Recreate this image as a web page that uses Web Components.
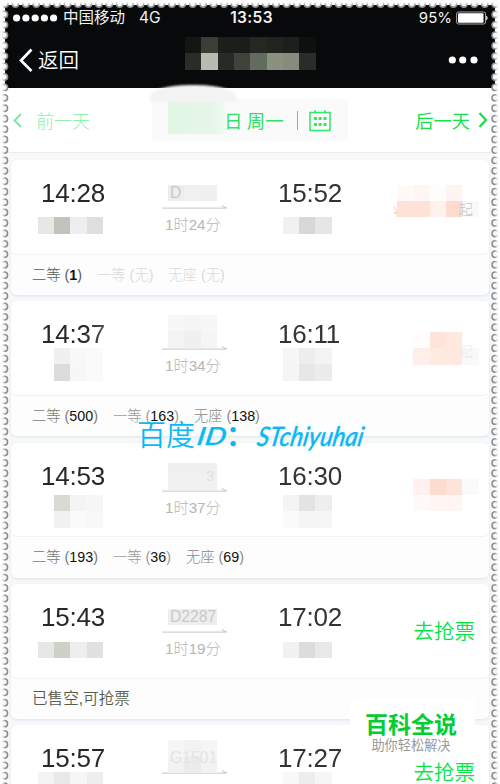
<!DOCTYPE html>
<html lang="zh-CN"><head><meta charset="utf-8"><title>车次列表</title>
<style>
html,body{margin:0;width:500px;height:784px;overflow:hidden;background:#fff}
body{font-family:"Liberation Sans","Noto Sans CJK SC",sans-serif}
</style></head><body>
<phone-screen>
<status-bar></status-bar>
<nav-bar></nav-bar>
<date-bar></date-bar>
<train-list></train-list>
</phone-screen>
<water-mark></water-mark>
<brand-badge></brand-badge>
<stamp-edge></stamp-edge>
<script>
function define(name, html, ready){
  const t=document.createElement('template'); t.innerHTML=html;
  customElements.define(name, class extends HTMLElement{
    connectedCallback(){
      if(this.shadowRoot) return;
      this.attachShadow({mode:'open'}).append(t.content.cloneNode(true));
      if(ready) ready(this,this.shadowRoot);
    }
  });
}
// Grid of blurred-out cells: rows split by "/", colours by space, "-" is clear.
define('mosaic-block',`<style>:host{display:grid;grid-auto-rows:var(--ch,16.4px);width:max-content}</style>`,(el,r)=>{
  const rows=el.getAttribute('cells').split('/').map(s=>s.trim().split(/\s+/));
  el.style.gridTemplateColumns=`repeat(${rows[0].length},16.35px)`;
  for(const c of rows.flat()){const i=document.createElement('i');i.style.background=c==='-'?'transparent':'#'+c;r.append(i);}
});
define('phone-screen',`<style>:host{display:flex;flex-direction:column;box-sizing:border-box;margin:5px 5px 0;height:779px;overflow:hidden;background:#f7f8fa}</style><slot></slot>`);
define('status-bar',`<style>
:host{display:grid;grid-template-columns:1fr auto 1fr;align-items:center;height:26px;flex:none;background:#08090b;color:#f2f2f2;padding:0 7px 0 8px;font:15.5px/26px Inter,"Noto Sans CJK SC",sans-serif}
div{display:flex;align-items:center}.r{justify-content:flex-end;gap:4px;font-size:15px}
.c{font-weight:600;font-size:15.5px;letter-spacing:.35px;margin-left:2px}
.n{margin-left:5px}.g{margin-left:14px;font-size:15.5px}svg{display:block}
</style><div><svg width="45" height="10"><g fill="#fff"><circle cx="3.6" cy="5" r="3.6"/><circle cx="12.9" cy="5" r="3.6"/><circle cx="22.2" cy="5" r="3.6"/><circle cx="31.4" cy="5" r="3.6"/><circle cx="40.6" cy="5" r="3.6"/></g></svg><span class="n">中国移动</span><span class="g">4G</span></div><span class="c">13:53</span><div class="r"><span>95%</span><svg width="32" height="14"><rect x=".6" y="1" width="29" height="12" rx="2" fill="none" stroke="#aaa"/><rect x="2" y="2.2" width="25.5" height="9.6" rx="1" fill="#fff"/><path d="M30.5 5q1.5 2 0 4z" fill="#fff" stroke="#ccc"/></svg></div>`);
define('nav-bar',`<style>
:host{display:flex;position:relative;align-items:center;justify-content:space-between;height:57px;flex:none;background:#08090b;color:#fff;padding:0 17px 0 13px;font:350 20.5px/57px "Noto Sans CJK SC",sans-serif;box-sizing:border-box}
.b{display:flex;align-items:center;gap:5px}
mosaic-block{position:absolute;left:180px;top:6px}
</style><div class="b"><svg width="15" height="24"><path d="M13.5 1.5 3 12.5 13.5 23" fill="none" stroke="#fff" stroke-width="2.7"/></svg><span>返回</span></div>
<mosaic-block cells="131613 393e37 1b1f1b 1a1d19 242722 20231e 1c1f1b 0e100f/282d28 b7bbb2 262b26 3e433c 636a5f 89917f 858c7d 282d2a"></mosaic-block>
<svg width="30" height="10"><g fill="#fff"><circle cx="4.3" cy="5" r="3.6"/><circle cx="14.7" cy="5" r="3.6"/><circle cx="26" cy="5" r="3.6"/></g></svg>`);
define('date-bar',`<style>
:host{position:relative;display:grid;grid-template-columns:147px 196px 1fr;align-items:center;height:65px;flex:none;box-sizing:border-box;background:#fff;border-bottom:1px solid #e9eaeb;font:300 18px/30px "Noto Sans CJK SC",sans-serif;color:#14e14b}
.p,.n{display:flex;align-items:center}.p{padding-left:8px;gap:14px;color:#8cf3ae}.n{justify-content:flex-end;padding-right:7px;gap:8px;font-size:18.3px;font-weight:400}
.d{display:flex;align-items:center;height:42px;background:#fafafa;border-radius:4px;color:#30e168}
.m{width:57px;height:33px;margin:-6px 0 0 16px;background:linear-gradient(90deg,#e0f7e5,#e6f6e9 80%,#effaf1)}
.t{font-size:18.5px;font-weight:400;white-space:pre;margin-left:-1px}
.bar{width:1.5px;height:19px;background:#38e56d;margin:0 11px 0 13px}
.s{position:absolute;left:145px;top:-3px;width:86px;height:17px;background:#f3f3f3;border-radius:45% 45% 0 0/70% 70% 0 0;filter:blur(1.2px)}
</style><i class="s"></i><div class="p"><svg width="9" height="15"><path d="M8 1 1.5 7.5 8 14" fill="none" stroke="#6fed9a" stroke-width="1.8"/></svg><span>前一天</span></div>
<div class="d"><i class="m"></i><span class="t">日 周一</span><i class="bar"></i><svg width="22" height="23"><g fill="none" stroke="#32e76a" stroke-width="1.5"><path d="M1 3.5H21V21.5H1zM6 1V4M16 1V4"/></g><g fill="#32e76a"><path d="M5 8h3v3H5zM9.7 8h3v3h-3zM14.5 8h3v3h-3zM5 14h3v3H5zM9.7 14h3v3h-3zM14.5 14h3v3h-3z"/></g></svg></div>
<div class="n"><span>后一天</span><svg width="10" height="16"><path d="M1.5 1 8 8 1.5 15" fill="none" stroke="#10df48" stroke-width="2.2"/></svg></div>`);
define('seat-count',`<style>:host{display:inline-flex;white-space:pre;font-weight:300}b{font-weight:400}i{font-style:normal}</style><span></span><b></b><i>)</i>`,(el,r)=>{
  r.querySelector('span').textContent=el.getAttribute('kind')+' (';
  const b=r.querySelector('b');b.textContent=el.getAttribute('n');b.style.color=el.getAttribute('n')==='无'?'inherit':'#111';b.style.fontWeight=el.getAttribute('n')==='无'?300:(el.hasAttribute('strong')?700:400);
});
define('train-card',`<style>
:host{position:relative;display:flex;flex-direction:column;height:135px;flex:none;background:#fdfdfd;border-radius:6px;box-shadow:0 1px 3px #dde3e8}
.top{height:94.5px;flex:none;background:#fff;border-radius:6px;border-bottom:1px solid #f1f2f3;display:grid;grid-template-columns:121px 120px 1fr auto;box-sizing:border-box;padding:17px 14px 0 30px}
.t{font:26px/32px "Liberation Sans",sans-serif;color:#252823;letter-spacing:-.2px}
.dep{-webkit-mask:var(--dm)}.arr{margin-left:-4px;color:#333;-webkit-mask:linear-gradient(#000 45%,#0007 80%)}
.mid{display:flex;flex-direction:column;height:66px;width:72px}
.no{height:21px;padding:6px 0 0 8px;font:15.7px/20px "Liberation Sans",sans-serif;color:var(--nc,#c9c9c9);white-space:pre;position:relative;z-index:2}
.arrow{display:block;flex:none;margin:1px 0 0 0}
.dur{font:15.2px/22px "Liberation Sans","Noto Sans CJK SC",sans-serif;font-weight:300;color:#b6b6b6;padding:0 0 0 3px;margin-top:4px;white-space:nowrap}
.act{font:350 20.5px/30px "Noto Sans CJK SC",sans-serif;color:#05e546;margin-top:14px}
.foot{display:flex;align-items:center;gap:15px;height:40px;padding-left:21px;font:14.3px/20px "Liberation Sans","Noto Sans CJK SC",sans-serif;font-weight:300;color:#565d51}
::slotted(mosaic-block),::slotted(.over){position:absolute}
</style><div class="top"><span class="t dep"></span><div class="mid"><span class="no"></span><svg class="arrow" width="66" height="5"><path d="M0 3.2H65L60 .6" fill="none" stroke="#d2d2d2" stroke-width="1.2"/></svg><span class="dur"></span></div><span class="t arr"></span><span class="act"></span></div><div class="foot"><slot name="seats"></slot></div><slot></slot>`,(el,r)=>{
  for(const c of ['dep','arr','no','dur','act']){const v=el.getAttribute(c),n=r.querySelector('.'+c);n.textContent=v||'';}
});
define('train-list',`<style>
:host{display:flex;flex-direction:column;gap:6.35px;padding:7px 6px 0;flex:1;min-height:0;background:#f6f8fa}
.over{font:300 15px/18px "Noto Sans CJK SC",sans-serif}
seat-count{display:inline-flex}
</style>
<train-card dep="14:28" arr="15:52" no="D" dur="1时24分" style="--dm:linear-gradient(#000 50%,#0008 85%)">
<seat-count slot="seats" kind="二等" n="1" strong></seat-count><seat-count slot="seats" kind="一等" n="无" style="color:#dadada"></seat-count><seat-count slot="seats" kind="无座" n="无" style="color:#dadada"></seat-count>
<mosaic-block style="left:26.5px;top:57.4px" cells="e7e8e5 c1c4bc eeeeee dedfde"></mosaic-block>
<mosaic-block style="left:271.5px;top:57.4px" cells="f1f1f1 d8d8d8 e6e6e6"></mosaic-block>
<mosaic-block style="left:157px;top:24.5px" cells="ededed f1f1f0 f0f0f0"></mosaic-block>
<span class="over" style="left:382px;top:42px;color:#fbd0bc">¥</span>
<mosaic-block style="left:386px;top:24.5px" cells="fffaf8 fff5f2 fffdfc fff4f1 ffffff/fee2d7 fee2d7 fff2ed fddccf f9f9f9"></mosaic-block>
<span class="over" style="left:447px;top:40px;color:#c8c8c8">起</span>
</train-card>
<train-card dep="14:37" arr="16:11" dur="1时34分" style="--dm:linear-gradient(100deg,#000 35%,#0007 70%)">
<seat-count slot="seats" kind="二等" n="500" style="color:#777c72"></seat-count><seat-count slot="seats" kind="一等" n="163" style="color:#999"></seat-count><seat-count slot="seats" kind="无座" n="138" style="color:#888"></seat-count>
<mosaic-block style="left:42.7px;top:46.5px" cells="f0f0ef f8f8f8 fafafa/dcdcda f7f7f7 fafafa"></mosaic-block>
<mosaic-block style="left:271.5px;top:46.5px" cells="f6f6f6 ededed f4f4f4/f5f5f5 e7e7e7 ececec"></mosaic-block>
<mosaic-block style="left:157px;top:13.5px" cells="f7f7f7 f5f5f5 f7f7f7/f3f3f3 f0f0f0 f5f5f5"></mosaic-block>
<mosaic-block style="left:402.3px;top:30.5px" cells="fffdfc fee4da fee8df ffffff/ffefeb ffeae2 ffe8df f9f9f9"></mosaic-block>
<span class="over" style="left:447px;top:41px;color:#ededed">起</span>
</train-card>
<train-card dep="14:53" arr="16:30" dur="1时37分" style="--dm:linear-gradient(#000 50%,#0006 85%)">
<seat-count slot="seats" kind="二等" n="193" style="color:#747a6f"></seat-count><seat-count slot="seats" kind="一等" n="36" style="color:#999"></seat-count><seat-count slot="seats" kind="无座" n="69" style="color:#888"></seat-count>
<mosaic-block style="left:42.7px;top:52.3px" cells="d8dad6 f4f4f4 f6f6f6/f1f1f0 fafafa f8f8f8"></mosaic-block>
<mosaic-block style="left:271.5px;top:52.3px" cells="f4f4f4 e3e3e3 eeeeee/fafafa f5f5f5 f6f6f6"></mosaic-block>
<mosaic-block style="left:157px;top:20px;--ch:13.5px" cells="f0f0f0 f0f0f0 efefef/f1f1f1 f1f1f1 f1f1f1"></mosaic-block>
<mosaic-block style="left:402.3px;top:36px" cells="fff1ed fddcd0 fde4da fafafa/fffaf8 fff7f4 fff6f3 ffffff"></mosaic-block>
<span class="over" style="left:195px;top:24px;color:#e2e2e2;font-family:'Liberation Sans'">3</span>
</train-card>
<train-card dep="15:43" arr="17:02" no="D2287" dur="1时19分" act="去抢票" style="--dm:linear-gradient(#000 60%,#000b 90%)">
<span slot="seats" style="font-size:15.6px;font-weight:350">已售空,可抢票</span>
<mosaic-block style="left:26.5px;top:58px" cells="e7e8e5 cdd2c9 eeeeee e0e2df"></mosaic-block>
<mosaic-block style="left:271.5px;top:58px" cells="f1f1f1 dcdcdc e8e8e8"></mosaic-block>
<mosaic-block style="left:157px;top:25px" cells="eeeeee eeeeee ededed"></mosaic-block>
</train-card>
<train-card dep="15:57" arr="17:27" no="G1501" act="去抢票" style="--nc:#e4e4e4;--dm:linear-gradient(#000 50%,#0007 90%)">
<mosaic-block style="left:26.5px;top:47px" cells="f3f3f3 e8e8e7 f6f6f6 eeeeee"></mosaic-block>
<mosaic-block style="left:271.5px;top:47px" cells="f8f8f8 ededed f6f6f6"></mosaic-block>
<mosaic-block style="left:157px;top:15px" cells="f5f5f5 f2f2f2 f5f5f5/f2f2f2 ebebeb f2f2f2"></mosaic-block>
</train-card>`);
define('water-mark',`<style>:host{position:absolute;left:130px;top:412px}svg{display:block}</style>
<svg width="250" height="50" fill="#08b9f5"><text x="7" y="34" font-family="Noto Sans CJK SC" font-weight="350" font-size="29">百度</text><g font-family="Lato" font-style="italic" font-weight="500" stroke="#08b9f5" stroke-width=".3"><text transform="translate(66 33) skewX(-10)" font-size="25" textLength="29" lengthAdjust="spacingAndGlyphs">ID</text><text transform="translate(126 34) skewX(-10)" font-size="27" textLength="106" lengthAdjust="spacingAndGlyphs">STchiyuhai</text></g><text x="96" y="34" font-family="Noto Sans CJK SC" font-weight="700" font-size="28">：</text></svg>`);
define('brand-badge',`<style>:host{position:absolute;left:350px;top:699px;width:125px;height:56px;background:#fff;display:flex;flex-direction:column;align-items:center;box-sizing:border-box;padding:10px 3px 0 0;font-family:"Noto Sans CJK SC",sans-serif}
b{font-size:23px;line-height:28px;color:#04cc33}span{font-size:13.2px;line-height:16px;color:#999}</style><b>百科全说</b><span>助你轻松解决</span>`);
// Perforated border: round notches along three sides, faded towards the outside.
define('stamp-edge',`<style>:host{position:absolute;inset:0;pointer-events:none}svg{display:block}</style>
<svg width="500" height="784"><defs><filter id="b" x="-20%" width="140%"><feGaussianBlur stdDeviation=".6"/></filter><filter id="o" x="-20%" y="-20%" width="140%" height="140%"><feGaussianBlur stdDeviation=".9"/></filter></defs><g id="n" fill="#f4f4f4" stroke="#8c8c8c" stroke-width="1.5" filter="url(#b)"></g><path d="M1.2 800V1.2H498.8V800" fill="none" stroke="#fff" stroke-width="5" filter="url(#o)"/></svg>`,(el,r)=>{
  let s='';const c=(x,y)=>s+=`<circle cx="${x}" cy="${y}" r="3.2"/>`;
  for(let i=0;i<48;i++)c(5+i*10.43,4);
  for(let y=14.4;y<790;y+=10.43){c(4.4,y);c(495.2,y);}
  r.querySelector('#n').innerHTML=s;
});
</script></body></html>
